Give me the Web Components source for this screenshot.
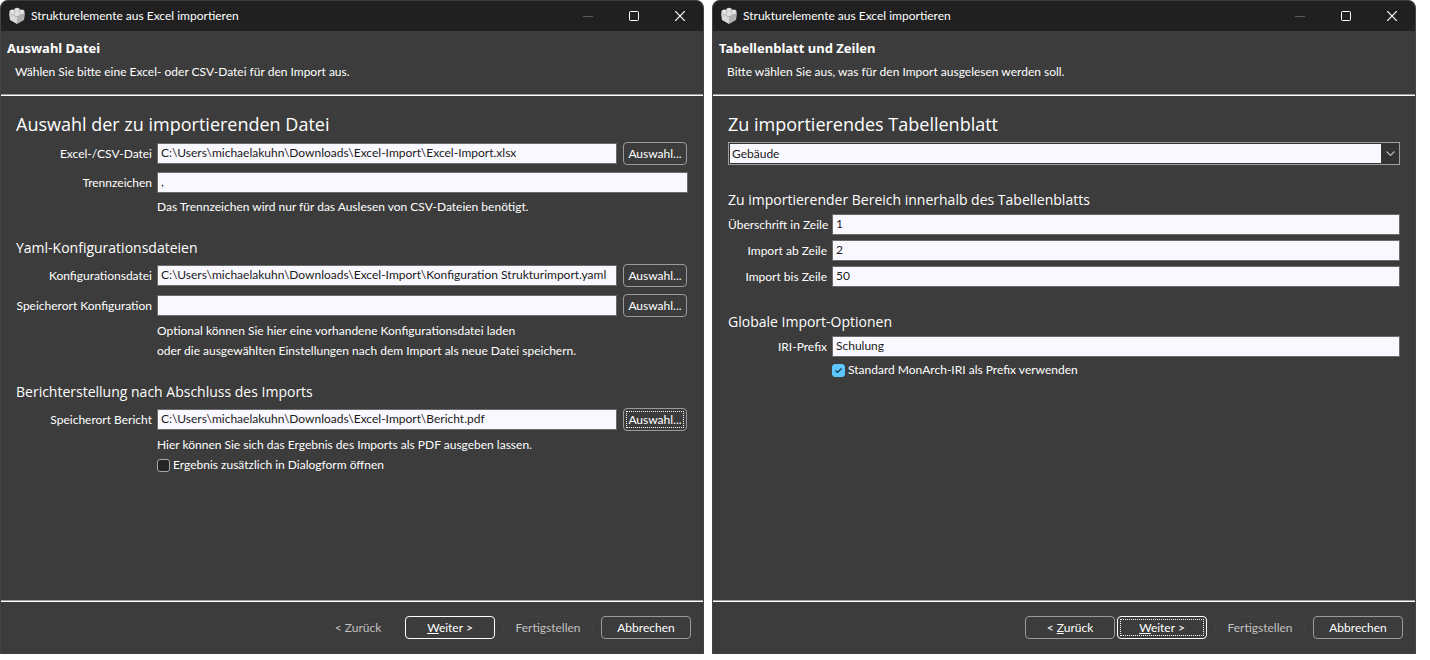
<!DOCTYPE html>
<html lang="de">
<head>
<meta charset="utf-8">
<title>Strukturelemente aus Excel importieren</title>
<style>
  * {
    box-sizing: border-box;
  }

  body {
    --heading-font: "Open Sans", "Noto Sans", sans-serif;
    margin: 0;
    min-height: 100vh;
    display: flex;
    gap: 8px;
    padding: 0 14px 6px 0;
    background: #fff;
    font: 12px/20px Lato, "Open Sans", sans-serif;
    color: #fff;
  }

  wizard-window {
    flex: 1;
  }
</style>
</head>
<body>

<wizard-window caption="Strukturelemente aus Excel importieren" heading="Auswahl Datei"
  description="Wählen Sie bitte eine Excel- oder CSV-Datei für den Import aus.">
  <form-section heading="Auswahl der zu importierenden Datei" level="1">
    <text-field label="Excel-/CSV-Datei" value="C:\Users\michaelakuhn\Downloads\Excel-Import\Excel-Import.xlsx">
      <push-button small>Auswahl...</push-button>
    </text-field>
    <text-field label="Trennzeichen" value=","></text-field>
    <help-text>Das Trennzeichen wird nur für das Auslesen von CSV-Dateien benötigt.</help-text>
  </form-section>

  <form-section heading="Yaml-Konfigurationsdateien">
    <text-field label="Konfigurationsdatei" value="C:\Users\michaelakuhn\Downloads\Excel-Import\Konfiguration Strukturimport.yaml">
      <push-button small>Auswahl...</push-button>
    </text-field>
    <text-field label="Speicherort Konfiguration" value="">
      <push-button small>Auswahl...</push-button>
    </text-field>
    <help-text>Optional können Sie hier eine vorhandene Konfigurationsdatei laden<br>oder die ausgewählten Einstellungen nach dem Import als neue Datei speichern.</help-text>
  </form-section>

  <form-section heading="Berichterstellung nach Abschluss des Imports">
    <text-field label="Speicherort Bericht" value="C:\Users\michaelakuhn\Downloads\Excel-Import\Bericht.pdf">
      <push-button small focused>Auswahl...</push-button>
    </text-field>
    <help-text>Hier können Sie sich das Ergebnis des Imports als PDF ausgeben lassen.</help-text>
    <check-option label="Ergebnis zusätzlich in Dialogform öffnen"></check-option>
  </form-section>

  <push-button slot="actions" disabled>&lt; Zurück</push-button>
  <push-button slot="actions" primary><u>W</u>eiter &gt;</push-button>
  <push-button slot="actions" class="apart" disabled>Fertigstellen</push-button>
  <push-button slot="actions" class="apart">Abbrechen</push-button>
</wizard-window>

<wizard-window class="compact" caption="Strukturelemente aus Excel importieren" heading="Tabellenblatt und Zeilen"
  description="Bitte wählen Sie aus, was für den Import ausgelesen werden soll.">
  <form-section heading="Zu importierendes Tabellenblatt" level="1">
    <select-field label="Zu importierendes Tabellenblatt" value="Gebäude"></select-field>
  </form-section>

  <form-section heading="Zu importierender Bereich innerhalb des Tabellenblatts">
    <text-field label="Überschrift in Zeile" value="1"></text-field>
    <text-field label="Import ab Zeile" value="2"></text-field>
    <text-field label="Import bis Zeile" value="50"></text-field>
  </form-section>

  <form-section heading="Globale Import-Optionen">
    <text-field label="IRI-Prefix" value="Schulung"></text-field>
    <check-option label="Standard MonArch-IRI als Prefix verwenden" checked></check-option>
  </form-section>

  <push-button slot="actions">&lt; <u>Z</u>urück</push-button>
  <push-button slot="actions" primary focused><u>W</u>eiter &gt;</push-button>
  <push-button slot="actions" class="apart" disabled>Fertigstellen</push-button>
  <push-button slot="actions" class="apart">Abbrechen</push-button>
</wizard-window>

<script>
const baseStyle = `
  * {
    box-sizing: border-box;
  }
  button, input, select {
    font: inherit;
    margin: 0;
  }
`;

class BaseElement extends HTMLElement {
  constructor() {
    super();
    this.attachShadow({ mode: "open" });
  }

  connectedCallback() {
    const template = document.createElement("template");
    template.innerHTML = `<style>${baseStyle}</style>${this.render()}`;
    this.shadowRoot.replaceChildren(template.content.cloneNode(true));
  }

  attr(name) {
    return this.getAttribute(name) || "";
  }
}

class WizardWindow extends BaseElement {
  render() {
    return `
      <style>
        :host {
          --label-width: 136px;
          --row-gap: 7px;
          --section-gap: 21px;
          --heading-gap: 6px;
          --check-gap: 0px;
          display: flex;
          flex-direction: column;
          min-width: 0;
          background: #3c3c3c;
          border: 1px solid #434343;
          border-top-color: #3a3a3a;
          border-radius: 8px 8px 0 0;
          overflow: hidden;
        }
        :host(.compact) {
          --label-width: 99px;
          --row-gap: 5px;
          --section-gap: 25px;
          --heading-gap: 4px;
          --check-gap: 3px;
        }
        .title-bar {
          display: flex;
          align-items: center;
          height: 30px;
          padding-left: 7px;
          background: #202020;
        }
        .title-bar .caption {
          flex: 1;
          padding-left: 5px;
          white-space: nowrap;
        }
        .title-bar button {
          display: flex;
          align-items: center;
          justify-content: center;
          width: 46px;
          height: 30px;
          padding: 0;
          border: 0;
          background: none;
          color: #fff;
        }
        .title-bar button:disabled {
          color: #5a5a5a;
        }
        header {
          padding: 7px 6px 12px;
        }
        h1 {
          margin: 0 0 4px;
          font: bold 13px/20px "Noto Sans", sans-serif;
        }
        header p {
          margin: 0;
          padding-left: 8px;
        }
        .rule {
          height: 2px;
          border-top: 1px solid #a0a0a0;
          border-bottom: 1px solid #fff;
        }
        main {
          flex: 1;
          display: flex;
          flex-direction: column;
          gap: var(--section-gap);
          padding: 14px 15px;
        }
        footer {
          display: flex;
          justify-content: flex-end;
          gap: 2px;
          padding: 14px 12px;
        }
        ::slotted(.apart) {
          margin-left: 6px;
        }
      </style>
      <div class="title-bar">
        <svg width="18" height="18" viewBox="0 0 18 18" aria-hidden="true">
          <path d="M1 6 9 3l8 3-8 4z" fill="#e6e6e6"/>
          <path d="M1 6l8 4v7l-7-4z" fill="#dadada"/>
          <path d="M17 6 9 10v7l7-4z" fill="#b2b2b2"/>
          <g fill="#f8f8f8" stroke="#a4a4a4" stroke-width=".5">
            <path d="M6.500 2.200v1.800a2.500 1.200 0 0 0 5 0V2.200z"/><ellipse cx="9" cy="2.200" rx="2.500" ry="1.200"/>
            <path d="M1.800 4v1.800a2.500 1.200 0 0 0 5 0V4z"/><ellipse cx="4.300" cy="4" rx="2.500" ry="1.200"/>
            <path d="M11.200 4v1.800a2.500 1.200 0 0 0 5 0V4z"/><ellipse cx="13.700" cy="4" rx="2.500" ry="1.200"/>
            <path d="M6.500 6v1.800a2.500 1.200 0 0 0 5 0V6z"/><ellipse cx="9" cy="6" rx="2.500" ry="1.200"/>
          </g>
        </svg>
        <span class="caption">${this.attr("caption")}</span>
        <button disabled aria-label="Minimieren">
          <svg width="10" height="10" viewBox="0 0 10 10"><path d="M0 5.500h10" stroke="currentColor"/></svg>
        </button>
        <button aria-label="Maximieren">
          <svg width="10" height="10" viewBox="0 0 10 10"><rect x=".5" y=".5" width="9" height="9" rx="1" fill="none" stroke="currentColor"/></svg>
        </button>
        <button aria-label="Schließen">
          <svg width="10" height="10" viewBox="0 0 10 10"><path d="M0 0l10 10M10 0 0 10" stroke="currentColor" stroke-width="1.200"/></svg>
        </button>
      </div>
      <header>
        <h1>${this.attr("heading")}</h1>
        <p>${this.attr("description")}</p>
      </header>
      <div class="rule"></div>
      <main><slot></slot></main>
      <div class="rule"></div>
      <footer><slot name="actions"></slot></footer>
    `;
  }
}

customElements.define("wizard-window", WizardWindow);

class FormSection extends BaseElement {
  render() {
    return `
      <style>
        :host {
          display: block;
        }
        h2 {
          margin: 0 0 var(--heading-gap);
          font: 14px/20px var(--heading-font);
        }
        h2.level-1 {
          margin-bottom: 4px;
          font-size: 18px;
          line-height: 28px;
        }
        .rows {
          display: flex;
          flex-direction: column;
        }
        ::slotted(text-field:not(:first-child)) {
          margin-top: var(--row-gap);
        }
      </style>
      <h2 class="level-${this.attr("level")}">${this.attr("heading")}</h2>
      <div class="rows"><slot></slot></div>
    `;
  }
}

customElements.define("form-section", FormSection);

class TextField extends BaseElement {
  render() {
    return `
      <style>
        :host {
          display: flex;
          align-items: center;
        }
        label {
          width: var(--label-width);
          margin-right: 5px;
          text-align: right;
          white-space: nowrap;
        }
        input {
          flex: 1;
          min-width: 0;
          height: 21px;
          padding: 0 3px 2px;
          border: 1px solid #6a6a6a;
          background: #faf8ff;
          color: #1a1a1a;
        }
        ::slotted(push-button) {
          margin: 0 1px 0 6px;
        }
      </style>
      <label for="input">${this.attr("label")}</label>
      <input type="text" id="input" value="${this.attr("value")}">
      <slot></slot>
    `;
  }
}

customElements.define("text-field", TextField);

class SelectField extends BaseElement {
  render() {
    return `
      <style>
        :host {
          display: flex;
          position: relative;
          border: 1px solid #a0a0a0;
          padding: 1px;
          background: #333;
        }
        select {
          flex: 1;
          height: 19px;
          margin-right: 17px;
          padding: 0 2px;
          appearance: none;
          border: 0;
          border-radius: 0;
          background: #faf8ff;
          color: #1a1a1a;
          line-height: 19px;
        }
        svg {
          position: absolute;
          right: 4px;
          top: 6px;
          pointer-events: none;
        }
      </style>
      <select aria-label="${this.attr("label")}"><option>${this.attr("value")}</option></select>
      <svg width="9" height="9" viewBox="0 0 9 9"><path d="M.5 2.500l4 4 4-4" fill="none" stroke="#b4b4b4" stroke-width="1.200"/></svg>
    `;
  }
}

customElements.define("select-field", SelectField);

class HelpText extends BaseElement {
  render() {
    return `
      <style>
        :host {
          display: block;
          margin: 4px 0 0 calc(var(--label-width) + 5px);
        }
      </style>
      <slot></slot>
    `;
  }
}

customElements.define("help-text", HelpText);

class CheckOption extends BaseElement {
  render() {
    return `
      <style>
        :host {
          display: block;
          margin: var(--check-gap) 0 0 calc(var(--label-width) + 5px);
        }
        label {
          display: flex;
          align-items: center;
          gap: 3px;
        }
        input {
          appearance: none;
          width: 13px;
          height: 13px;
          border: 1px solid #a8a8a8;
          border-radius: 3px;
          background: #242424;
        }
        input:checked {
          border-color: #5cc8ff;
          background: #5cc8ff;
        }
        .box {
          display: grid;
        }
        .box > * {
          grid-area: 1 / 1;
        }
        svg {
          pointer-events: none;
        }
        input:not(:checked) + svg {
          display: none;
        }
      </style>
      <label>
        <span class="box">
          <input type="checkbox" ${this.hasAttribute("checked") ? "checked" : ""}>
          <svg width="13" height="13" viewBox="0 0 13 13"><path d="M3.500 6.500l2 2 4-4" fill="none" stroke="#10303f" stroke-width="1.200"/></svg>
        </span>
        ${this.attr("label")}
      </label>
    `;
  }
}

customElements.define("check-option", CheckOption);

class PushButton extends BaseElement {
  render() {
    return `
      <style>
        :host {
          display: block;
        }
        button {
          display: block;
          position: relative;
          width: 90px;
          height: 23px;
          padding: 0;
          border: 1px solid #9a9a9a;
          border-radius: 4px;
          background: #3c3c3c;
          color: #fff;
          line-height: 20px;
          white-space: nowrap;
        }
        :host([small]) button {
          width: 64px;
        }
        :host([primary]) button {
          border-color: #fff;
        }
        button:disabled {
          border-color: #404040;
          color: #c0c0c0;
        }
        :host([focused]) button::after {
          content: "";
          position: absolute;
          inset: 2px;
          border: 1px dotted #fff;
        }
      </style>
      <button type="button" ${this.hasAttribute("disabled") ? "disabled" : ""}><slot></slot></button>
    `;
  }
}

customElements.define("push-button", PushButton);
</script>
</body>
</html>
